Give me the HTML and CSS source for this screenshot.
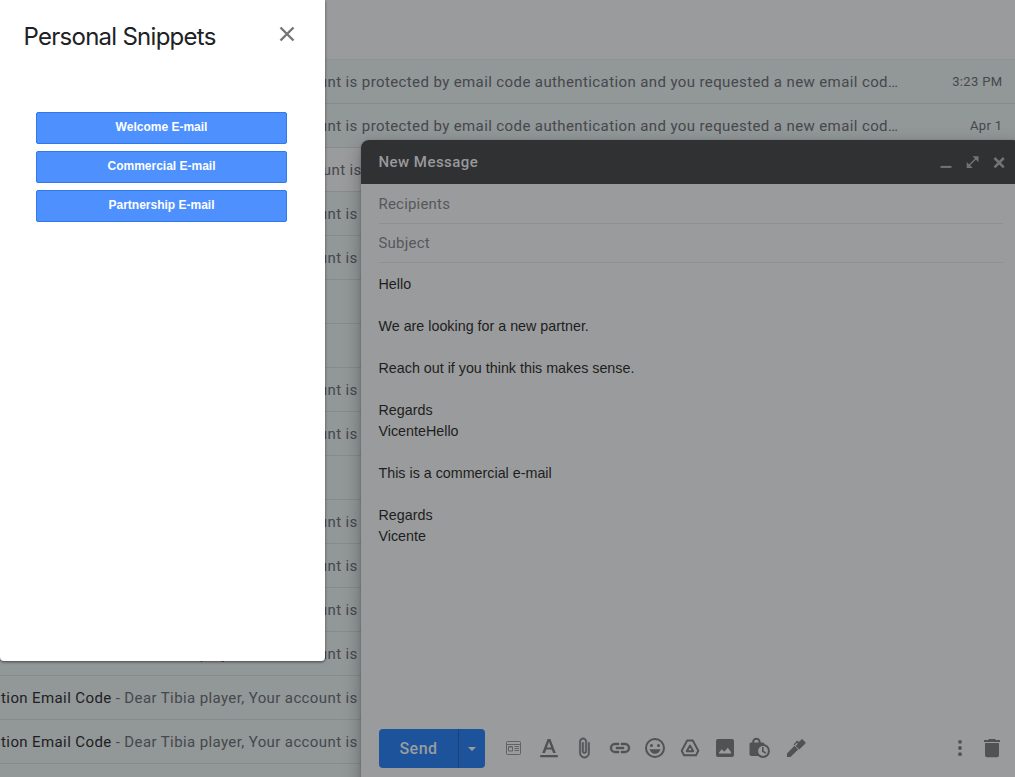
FILE: index.html
```html
<!DOCTYPE html>
<html lang="en">
<head>
<meta charset="utf-8">
<title>Mail</title>
<link rel="stylesheet" href="styles.css">
</head>
<body>
<main class="inbox">
  <header class="toolbar"></header>
  <div class="row"><p class="text"><b>ation Email Code</b> - Dear Tibia player, Your account is protected by email code authentication and you requested a new email code. Please</p><time>3:23 PM</time></div>
  <div class="row"><p class="text"><b>ation Email Code</b> - Dear Tibia player, Your account is protected by email code authentication and you requested a new email code. Please</p><time>Apr 1</time></div>
  <div class="row unread"><p class="text"><b>ation Email Code</b> - Dear Tibia player, Your account is</p></div>
  <div class="row"><p class="text"><b>ation Email Code</b> - Dear Tibia player, Your account is</p></div>
  <div class="row"><p class="text"><b>ation Email Code</b> - Dear Tibia player, Your account is</p></div>
  <div class="row"></div>
  <div class="row"></div>
  <div class="row"><p class="text"><b>ation Email Code</b> - Dear Tibia player, Your account is</p></div>
  <div class="row"><p class="text"><b>ation Email Code</b> - Dear Tibia player, Your account is</p></div>
  <div class="row"></div>
  <div class="row"><p class="text"><b>ation Email Code</b> - Dear Tibia player, Your account is</p></div>
  <div class="row"><p class="text"><b>ation Email Code</b> - Dear Tibia player, Your account is</p></div>
  <div class="row"><p class="text"><b>ation Email Code</b> - Dear Tibia player, Your account is</p></div>
  <div class="row"><p class="text"><b>ation Email Code</b> - Dear Tibia player, Your account is</p></div>
  <div class="row"><p class="text"><b>ation Email Code</b> - Dear Tibia player, Your account is</p></div>
  <div class="row"><p class="text"><b>ation Email Code</b> - Dear Tibia player, Your account is</p></div>
  <div class="row"></div>
</main>

<section class="compose">
  <header class="compose-head">
    <h2>New Message</h2>
    <svg class="win" viewBox="0 0 16 16"><path d="M2.500 12.900h11" stroke-width="2"/></svg>
    <svg class="win" viewBox="0.500 0 16 16"><path d="M4 12L12 4" stroke-width="1.500"/><path class="solid" d="M8 2.200h6v6zM2.200 8v6h6z"/></svg>
    <svg class="win" viewBox="0 0 16 16"><path d="M3.500 4l9.300 9.300M12.800 4l-9.300 9.300" stroke-width="2.500"/></svg>
  </header>
  <div class="field">Recipients</div>
  <div class="field subject">Subject</div>
  <div class="message">Hello

We are looking for a new partner.

Reach out if you think this makes sense.

Regards
VicenteHello

This is a commercial e-mail

Regards
Vicente</div>
  <footer class="actions">
    <div class="send"><span>Send</span><i></i></div>
    <div class="tools">
      <svg class="thin" viewBox="0 0 24 24"><rect x="4.500" y="5.500" width="14" height="13" rx="1"/><path d="M4.500 8.500h14M6.500 11v4h4v-4zM12.500 10.500h4.500M12.500 12.500h4.500M12.500 14.500h4.500M6.500 10.500h4"/></svg>
      <svg viewBox="0 0 24 24"><path d="M3.200 19h17.600v2.200H3.200zM5.200 17h2.700l1.300-3.500h5.600l1.300 3.500h2.700L13.400 3h-2.800zM9.900 11.400L12 5.800l2.100 5.600z"/></svg>
      <svg viewBox="-1 -1 26 26"><path d="M16.500 6v11.500c0 2.210-1.790 4-4 4s-4-1.790-4-4V5a2.500 2.500 0 0 1 5 0v10.500c0 .550-.450 1-1 1s-1-.450-1-1V6H10v9.500a2.500 2.500 0 0 0 5 0V5c0-2.210-1.790-4-4-4S7 2.790 7 5v12.500c0 3.040 2.460 5.500 5.500 5.500s5.500-2.460 5.500-5.500V6z" stroke="#505254" stroke-width=".5"/></svg>
      <svg viewBox="0 0 24 24"><path d="M3.900 12a3.100 3.100 0 0 1 3.100-3.100h4V7H7a5 5 0 0 0 0 10h4v-1.900H7A3.100 3.100 0 0 1 3.900 12zM8 13h8v-2H8zm9-6h-4v1.900h4a3.100 3.100 0 0 1 0 6.200h-4V17h4a5 5 0 0 0 0-10z" stroke="#505254" stroke-width=".4"/></svg>
      <svg viewBox="0 0 24 24"><path d="M12 2a10 10 0 1 0 0 20 10 10 0 0 0 0-20zm0 18a8 8 0 1 1 0-16 8 8 0 0 1 0 16zM8.500 11a1.500 1.500 0 1 0 0-3 1.500 1.500 0 0 0 0 3zm7 0a1.500 1.500 0 1 0 0-3 1.500 1.500 0 0 0 0 3zM6.500 13.200c.700 2.700 2.800 4.500 5.500 4.500s4.800-1.800 5.500-4.500z"/></svg>
      <svg class="drive" viewBox="0 0 24 24"><path d="M9.200 4.500h5.600l5.500 10.200-2.300 4.500H6l-2.300-4.500z"/><path d="M12 9.600l3.300 5.600H8.700z"/></svg>
      <svg viewBox="0 0 24 24"><path d="M21 19V5a2 2 0 0 0-2-2H5a2 2 0 0 0-2 2v14c0 1.100.900 2 2 2h14a2 2 0 0 0 2-2zM6 17.500v-1l2.800-3.300 2.500 2.500 3.500-4 3.200 4.300v1.500z"/></svg>
      <svg viewBox="0 0 24 24"><path d="M4.200 6.500V6a4.200 4.200 0 0 1 8.400 0v.5h2c1 0 1.700.600 1.800 1.500v6L11 20H3.200A1.700 1.700 0 0 1 1.500 18.300V8c0-.900.700-1.500 1.700-1.500zm2 0h4.400V6a2.200 2.200 0 0 0-4.400 0z"/><circle cx="15" cy="15" r="6.900"/><circle class="hole" cx="15" cy="15" r="4.900"/><path class="hand" d="M14.800 11v4.200l3 2"/></svg>
      <svg viewBox="0 0 24 24"><path d="M3 21v-3.500l7.500-7.700 3.700 3.700L6.500 21zM9.500 8.400l3.800-3.800 1.500 1.500L17.200 3.700c.5-.5 1.200-.5 1.700 0L21.200 6c.5.500.5 1.200 0 1.700l-5.900 5.900-3.700-3.700 2.200-2.200-.900-.900-2.400 2.400z"/></svg>
    </div>
    <svg class="more" viewBox="0 0 24 24"><circle cx="12" cy="5.800" r="1.900"/><circle cx="12" cy="12" r="1.900"/><circle cx="12" cy="18.200" r="1.900"/></svg>
    <svg class="trash" viewBox="0 0 24 24"><path d="M5 7h14v12.200a2 2 0 0 1-2 2H7a2 2 0 0 1-2-2zM4 4h4l1-1h6l1 1h4v2.100H4z"/></svg>
  </footer>
</section>

<aside class="drawer">
  <header class="drawer-head">
    <h1>Personal Snippets</h1>
    <svg viewBox="0 0 16 16"><path d="M1.500 1.500l13 13M14.500 1.500l-13 13"/></svg>
  </header>
  <div class="snippets">
    <button>Welcome E-mail</button>
    <button>Commercial E-mail</button>
    <button>Partnership E-mail</button>
  </div>
</aside>
</body>
</html>
```
FILE: styles.css
```css
* { box-sizing: border-box; }
body {
  margin: 0;
  width: 1015px;
  height: 777px;
  overflow: hidden;
  position: relative;
  background: #9a9b9d;
  font-family: Roboto, sans-serif;
}
h1, h2, p { margin: 0; }

.inbox { height: 777px; overflow: hidden; }
.toolbar { height: 60px; border-bottom: 1px solid #909394; }
.row {
  height: 44px;
  display: flex;
  align-items: center;
  justify-content: space-between;
  padding-right: 12.500px;
  border-bottom: 1px solid #868b8d;
  background: #929798;
  color: #45484c;
}
.row.unread { background: #9a9b9d; }
.row.unread .text { margin-left: -3.500px; }
.text {
  width: 908px;
  margin-left: -7.500px;
  overflow: hidden;
  white-space: nowrap;
  text-overflow: ellipsis;
  font-size: 15px;
  line-height: 20px;
  letter-spacing: .39px;
}
.text b { font-weight: 400; color: #1e2023; }
.row time { font-size: 13px; letter-spacing: .35px; }

.compose {
  position: absolute;
  left: 361px;
  top: 140px;
  width: 660px;
  height: 650px;
  display: flex;
  flex-direction: column;
  background: #9a9b9d;
  border-radius: 8px 8px 0 0;
  box-shadow: 0 6px 18px rgba(0, 0, 0, .32), 0 1px 3px rgba(0, 0, 0, .2);
}
.compose-head {
  height: 44px;
  display: flex;
  align-items: center;
  gap: 10.500px;
  padding: 0 14px 0 17.500px;
  border-radius: 8px 8px 0 0;
  background: #303133;
}
.compose-head h2 {
  flex: 1;
  color: #98999b;
  font-size: 15px;
  font-weight: 500;
  letter-spacing: .45px;
}
.win {
  width: 16px;
  height: 16px;
  fill: none;
  stroke: #737476;
}
.win .solid { fill: #737476; stroke: none; }
.field {
  height: 39.500px;
  margin: 0 18px 0 17.500px;
  border-bottom: 1px solid #8f9092;
  color: #56585a;
  font-size: 15px;
  line-height: 40px;
  letter-spacing: .2px;
}
.field.subject { line-height: 38px; }
.message {
  flex: 1;
  padding: 11px 17.500px;
  white-space: pre-wrap;
  color: #1d1e20;
  font-family: "Liberation Sans", sans-serif;
  font-size: 14.300px;
  line-height: 21px;
}
.actions {
  height: 62px;
  display: flex;
  align-items: flex-start;
  padding: 1px 17px 0 18px;
}
.actions > svg, .tools svg { width: 24px; height: 24px; fill: #505254; margin-top: 7px; }
.send {
  display: flex;
  align-items: center;
  width: 106px;
  height: 39px;
  border-radius: 4px;
  background: #1d539a;
  color: #9a9ca0;
}
.send span {
  width: 80px;
  border-right: 1px solid #17427c;
  text-align: center;
  font-size: 16px;
  font-weight: 500;
  letter-spacing: .5px;
  line-height: 39px;
}
.send i {
  margin-left: 9px;
  border: 4.500px solid transparent;
  border-top-color: #9a9ca0;
  border-bottom: 0;
}
.tools { flex: 1; display: flex; gap: 11.200px; margin-left: 17px; }
.tools .thin { fill: none; stroke: #606264; stroke-width: 1; }
.tools .drive { fill: none; stroke: #505254; stroke-width: 1.900; stroke-linejoin: round; }
.tools .hole { fill: #9a9b9d; }
.tools .hand { fill: none; stroke: #505254; stroke-width: 1.600; }
.actions .more { margin-right: 8px; }

.drawer {
  position: absolute;
  left: 0;
  top: 0;
  width: 325px;
  height: 661px;
  background: #fff;
  border-radius: 0 0 4px 4px;
  box-shadow: 0 1px 3px rgba(0, 0, 0, .55);
}
.drawer-head {
  display: flex;
  justify-content: space-between;
  align-items: center;
  height: 72px;
  padding: 0 30px 0 23.500px;
}
.drawer-head h1 {
  color: #202124;
  font-family: Inter, sans-serif;
  font-size: 24px;
  font-weight: 400;
  letter-spacing: -.73px;
}
.drawer-head svg {
  width: 16px;
  height: 16px;
  margin-top: -4px;
  fill: none;
  stroke: #757575;
  stroke-width: 2.400;
}
.snippets {
  display: grid;
  gap: 7px;
  margin: 40px 38px 0 36px;
}
.snippets button {
  height: 32px;
  padding: 0 0 2px;
  border: 1px solid #3079ed;
  border-radius: 2px;
  background: #4d90fe;
  color: #fff;
  font: bold 12px "Liberation Sans", sans-serif;
}
```
